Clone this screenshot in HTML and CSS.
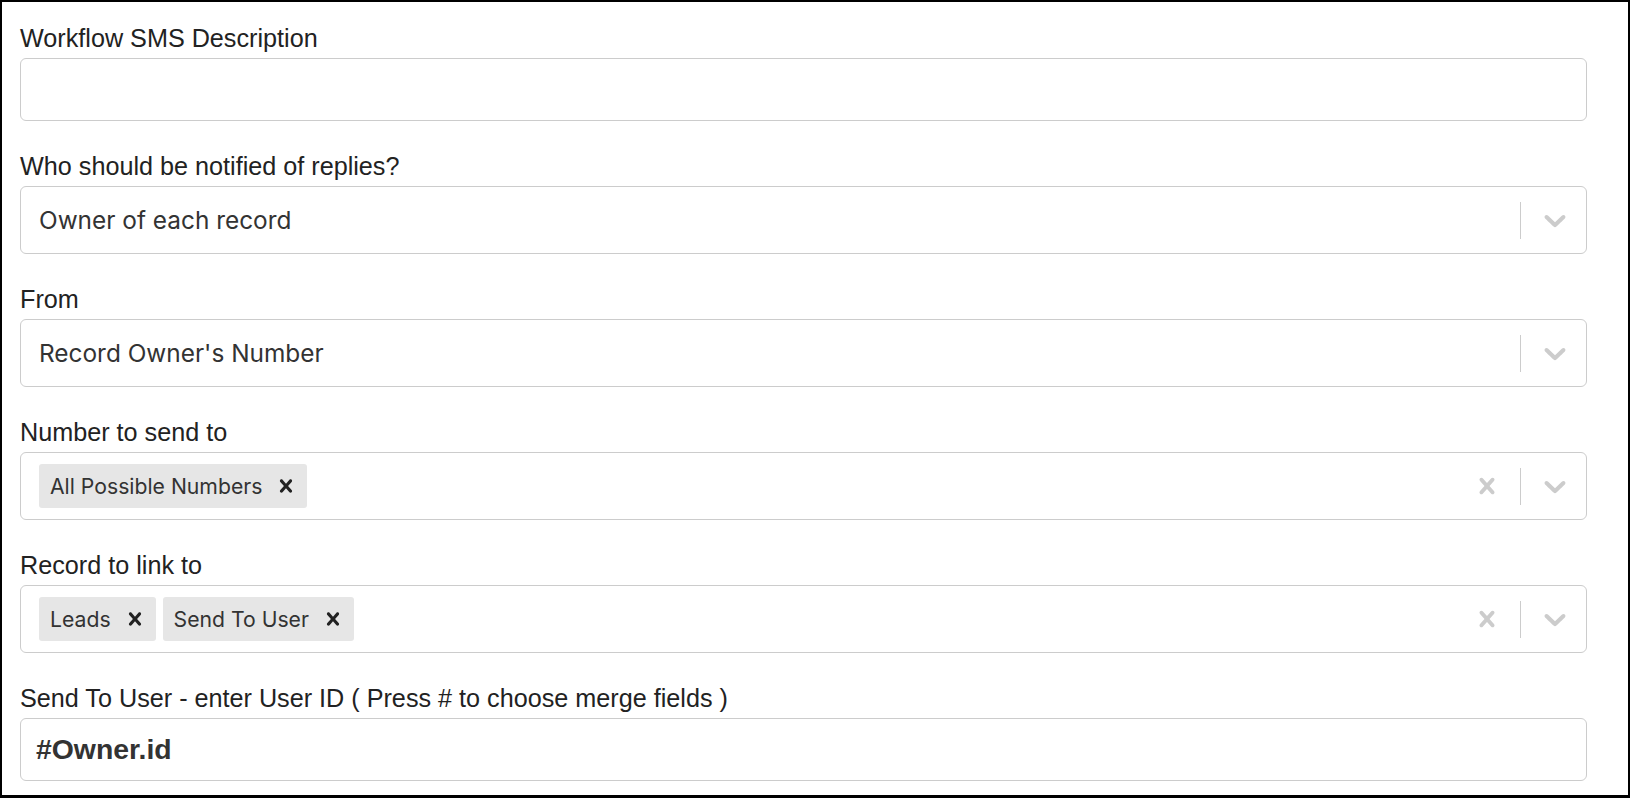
FILE: index.html
```html
<!DOCTYPE html>
<html>
<head>
<meta charset="utf-8">
<link rel="stylesheet" href="styles.css">
</head>
<body>
<div class="frame">
  <div class="field">
    <div class="label">Workflow SMS Description</div>
    <div class="input"></div>
  </div>
  <div class="field">
    <div class="label">Who should be notified of replies?</div>
    <div class="select">
      <div class="values"><span class="single">Owner of each record</span></div>
      <div class="indicators">
        <span class="sep"></span>
        <span class="chev"><svg width="36" height="36" viewBox="0 0 20 20"><path d="M4.516 7.548c0.436-0.446 1.043-0.481 1.576 0l3.908 3.747 3.908-3.747c0.533-0.481 1.141-0.446 1.574 0 0.436 0.445 0.408 1.197 0 1.615-0.406 0.418-4.695 4.502-4.695 4.502-0.217 0.223-0.502 0.335-0.787 0.335s-0.57-0.112-0.789-0.335c0 0-4.287-4.084-4.695-4.502s-0.436-1.17 0-1.615z"/></svg></span>
      </div>
    </div>
  </div>
  <div class="field">
    <div class="label">From</div>
    <div class="select">
      <div class="values"><span class="single">Record Owner's Number</span></div>
      <div class="indicators">
        <span class="sep"></span>
        <span class="chev"><svg width="36" height="36" viewBox="0 0 20 20"><path d="M4.516 7.548c0.436-0.446 1.043-0.481 1.576 0l3.908 3.747 3.908-3.747c0.533-0.481 1.141-0.446 1.574 0 0.436 0.445 0.408 1.197 0 1.615-0.406 0.418-4.695 4.502-4.695 4.502-0.217 0.223-0.502 0.335-0.787 0.335s-0.57-0.112-0.789-0.335c0 0-4.287-4.084-4.695-4.502s-0.436-1.17 0-1.615z"/></svg></span>
      </div>
    </div>
  </div>
  <div class="field">
    <div class="label">Number to send to</div>
    <div class="select">
      <div class="values">
        <span class="chip"><span class="chip-text">All Possible Numbers</span><span class="chip-x"><svg width="26" height="26" viewBox="0 0 20 20"><path d="M14.348 14.849c-0.469 0.469-1.229 0.469-1.697 0l-2.651-3.030-2.651 3.029c-0.469 0.469-1.229 0.469-1.697 0-0.469-0.469-0.469-1.229 0-1.697l2.758-3.15-2.759-3.152c-0.469-0.469-0.469-1.228 0-1.697s1.228-0.469 1.697 0l2.652 3.031 2.651-3.031c0.469-0.469 1.228-0.469 1.697 0s0.469 1.229 0 1.697l-2.758 3.152 2.758 3.15c0.469 0.469 0.469 1.229 0 1.698z"/></svg></span></span>
      </div>
      <div class="indicators">
        <span class="clear"><svg width="32" height="32" viewBox="0 0 20 20"><path d="M14.348 14.849c-0.469 0.469-1.229 0.469-1.697 0l-2.651-3.030-2.651 3.029c-0.469 0.469-1.229 0.469-1.697 0-0.469-0.469-0.469-1.229 0-1.697l2.758-3.15-2.759-3.152c-0.469-0.469-0.469-1.228 0-1.697s1.228-0.469 1.697 0l2.652 3.031 2.651-3.031c0.469-0.469 1.228-0.469 1.697 0s0.469 1.229 0 1.697l-2.758 3.152 2.758 3.150c0.469 0.469 0.469 1.229 0 1.698z"/></svg></span>
        <span class="sep"></span>
        <span class="chev"><svg width="36" height="36" viewBox="0 0 20 20"><path d="M4.516 7.548c0.436-0.446 1.043-0.481 1.576 0l3.908 3.747 3.908-3.747c0.533-0.481 1.141-0.446 1.574 0 0.436 0.445 0.408 1.197 0 1.615-0.406 0.418-4.695 4.502-4.695 4.502-0.217 0.223-0.502 0.335-0.787 0.335s-0.57-0.112-0.789-0.335c0 0-4.287-4.084-4.695-4.502s-0.436-1.17 0-1.615z"/></svg></span>
      </div>
    </div>
  </div>
  <div class="field">
    <div class="label">Record to link to</div>
    <div class="select">
      <div class="values">
        <span class="chip"><span class="chip-text">Leads</span><span class="chip-x"><svg width="26" height="26" viewBox="0 0 20 20"><path d="M14.348 14.849c-0.469 0.469-1.229 0.469-1.697 0l-2.651-3.030-2.651 3.029c-0.469 0.469-1.229 0.469-1.697 0-0.469-0.469-0.469-1.229 0-1.697l2.758-3.15-2.759-3.152c-0.469-0.469-0.469-1.228 0-1.697s1.228-0.469 1.697 0l2.652 3.031 2.651-3.031c0.469-0.469 1.228-0.469 1.697 0s0.469 1.229 0 1.697l-2.758 3.152 2.758 3.15c0.469 0.469 0.469 1.229 0 1.698z"/></svg></span></span>
        <span class="chip"><span class="chip-text">Send To User</span><span class="chip-x"><svg width="26" height="26" viewBox="0 0 20 20"><path d="M14.348 14.849c-0.469 0.469-1.229 0.469-1.697 0l-2.651-3.030-2.651 3.029c-0.469 0.469-1.229 0.469-1.697 0-0.469-0.469-0.469-1.229 0-1.697l2.758-3.15-2.759-3.152c-0.469-0.469-0.469-1.228 0-1.697s1.228-0.469 1.697 0l2.652 3.031 2.651-3.031c0.469-0.469 1.228-0.469 1.697 0s0.469 1.229 0 1.697l-2.758 3.152 2.758 3.15c0.469 0.469 0.469 1.229 0 1.698z"/></svg></span></span>
      </div>
      <div class="indicators">
        <span class="clear"><svg width="32" height="32" viewBox="0 0 20 20"><path d="M14.348 14.849c-0.469 0.469-1.229 0.469-1.697 0l-2.651-3.030-2.651 3.029c-0.469 0.469-1.229 0.469-1.697 0-0.469-0.469-0.469-1.229 0-1.697l2.758-3.15-2.759-3.152c-0.469-0.469-0.469-1.228 0-1.697s1.228-0.469 1.697 0l2.652 3.031 2.651-3.031c0.469-0.469 1.228-0.469 1.697 0s0.469 1.229 0 1.697l-2.758 3.152 2.758 3.150c0.469 0.469 0.469 1.229 0 1.698z"/></svg></span>
        <span class="sep"></span>
        <span class="chev"><svg width="36" height="36" viewBox="0 0 20 20"><path d="M4.516 7.548c0.436-0.446 1.043-0.481 1.576 0l3.908 3.747 3.908-3.747c0.533-0.481 1.141-0.446 1.574 0 0.436 0.445 0.408 1.197 0 1.615-0.406 0.418-4.695 4.502-4.695 4.502-0.217 0.223-0.502 0.335-0.787 0.335s-0.57-0.112-0.789-0.335c0 0-4.287-4.084-4.695-4.502s-0.436-1.17 0-1.615z"/></svg></span>
      </div>
    </div>
  </div>
  <div class="field">
    <div class="label">Send To User - enter User ID ( Press # to choose merge fields )</div>
    <div class="input"><span class="bold-val">#Owner.id</span></div>
  </div>
</div>
</body>
</html>
```

FILE: styles.css
```css
* { box-sizing: border-box; }
html, body { margin: 0; padding: 0; background: #fff; }
.frame {
  width: 1630px;
  height: 798px;
  border-style: solid;
  border-color: #000;
  border-width: 2px 2px 3px 2px;
  padding: 20px 41px 0 18px;
  display: flex;
  flex-direction: column;
  gap: 29px;
  overflow: hidden;
}
.field { display: flex; flex-direction: column; }
.label {
  font-family: "Liberation Sans", Arial, sans-serif;
  font-size: 25.2px;
  line-height: 32px;
  color: #222;
  margin-bottom: 4px;
  white-space: nowrap;
}
.input {
  height: 63px;
  border: 1px solid #ccc;
  border-radius: 6px;
  display: flex;
  align-items: center;
  padding-left: 15px;
}
.bold-val {
  font-family: "Liberation Sans", Arial, sans-serif;
  font-weight: bold;
  font-size: 28.4px;
  color: #333;
}
.select {
  height: 68px;
  border: 1px solid #ccc;
  border-radius: 6px;
  display: flex;
  align-items: center;
}
.values {
  flex: 1;
  display: flex;
  align-items: center;
  gap: 7px;
  padding-left: 18px;
}
.single {
  font-family: Inter, "Noto Sans", sans-serif;
  font-size: 24.4px;
  color: #333;
}
.chip {
  display: flex;
  align-items: center;
  height: 44px;
  background: #e6e6e6;
  border-radius: 3px;
  padding-left: 11px;
}
.chip-text {
  font-family: Inter, "Noto Sans", sans-serif;
  font-size: 21.2px;
  color: #333;
  padding-right: 3px;
}
.chip-x {
  width: 42px;
  height: 44px;
  display: flex;
  align-items: center;
  justify-content: center;
}
.chip-x svg { fill: #222; }
.indicators {
  display: flex;
  align-items: center;
  padding-right: 13px;
}
.clear { display: flex; margin-right: 17px; }
.clear svg { fill: #ccc; }
.sep {
  width: 1px;
  height: 37px;
  background: #ccc;
  margin-right: 16px;
}
.chev { display: flex; }
.chev svg { fill: #ccc; }
```
